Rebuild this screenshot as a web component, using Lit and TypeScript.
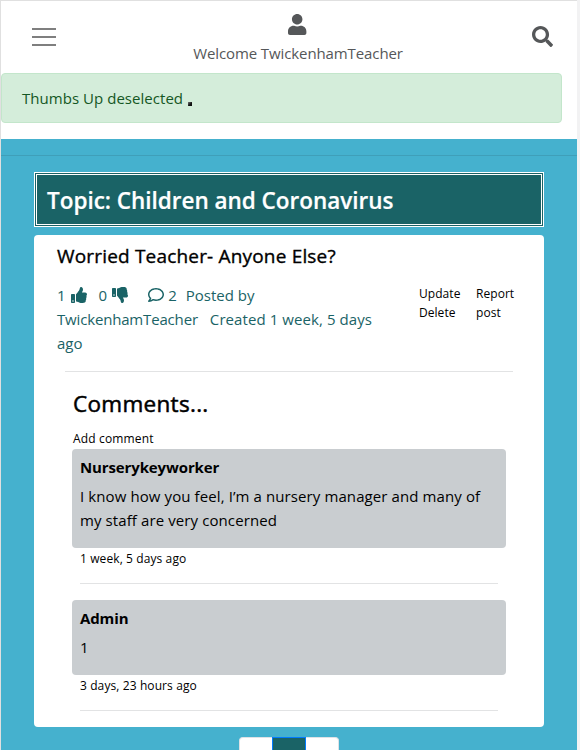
import { LitElement, html, css, svg } from "lit";
import { customElement, property } from "lit/decorators.js";

const ICONS: Record<string, { w: number; d: string }> = {
  user: { w: 448, d: "M224 256c70.7 0 128-57.3 128-128S294.7 0 224 0 96 57.3 96 128s57.3 128 128 128zm89.6 32h-16.7c-22.2 10.2-46.9 16-72.9 16s-50.6-5.8-72.9-16h-16.7C60.2 288 0 348.2 0 422.4V464c0 26.5 21.5 48 48 48h352c26.5 0 48-21.5 48-48v-41.6c0-74.2-60.2-134.4-134.4-134.4z" },
  search: { w: 512, d: "M505 442.7L405.3 343c-4.5-4.5-10.6-7-17-7H372c27.6-35.3 44-79.7 44-128C416 93.1 322.9 0 208 0S0 93.1 0 208s93.1 208 208 208c48.3 0 92.7-16.4 128-44v16.3c0 6.4 2.5 12.5 7 17l99.7 99.7c9.4 9.4 24.6 9.4 33.9 0l28.3-28.3c9.4-9.4 9.4-24.6.1-34zM208 336c-70.7 0-128-57.2-128-128 0-70.7 57.2-128 128-128 70.7 0 128 57.2 128 128 0 70.7-57.2 128-128 128z" },
  up: { w: 512, d: "M104 224H24c-13.255 0-24 10.745-24 24v240c0 13.255 10.745 24 24 24h80c13.255 0 24-10.745 24-24V248c0-13.255-10.745-24-24-24zM64 472c-13.255 0-24-10.745-24-24s10.745-24 24-24 24 10.745 24 24-10.745 24-24 24zM384 81.452c0 42.416-25.97 66.208-33.277 94.548h101.723c33.397 0 59.397 27.746 59.553 58.098.084 17.938-7.546 37.249-19.439 49.197l-.11.11c9.836 23.337 8.237 56.037-9.308 79.469 8.681 25.895-.069 57.704-16.382 74.757 4.298 17.598 2.244 32.575-6.148 44.632C440.202 511.587 389.616 512 346.839 512l-2.845-.001c-48.287-.017-87.806-17.598-119.56-31.725-15.957-7.099-36.821-15.887-52.651-16.178-6.54-.12-11.783-5.457-11.783-11.998v-213.77c0-3.2 1.282-6.271 3.558-8.521 39.614-39.144 56.648-80.587 89.117-113.111 14.804-14.832 20.188-37.236 25.393-58.902C282.515 39.293 291.817 0 312 0c24 0 72 8 72 81.452z" },
  down: { w: 512, d: "M0 56v240c0 13.255 10.745 24 24 24h80c13.255 0 24-10.745 24-24V56c0-13.255-10.745-24-24-24H24C10.745 32 0 42.745 0 56zm40 200c0-13.255 10.745-24 24-24s24 10.745 24 24-10.745 24-24 24-24-10.745-24-24zm272 256c-20.183 0-29.485-39.293-33.931-57.795-5.206-21.666-10.589-44.07-25.393-58.902-32.469-32.524-49.503-73.967-89.117-113.111a11.98 11.98 0 0 1-3.558-8.521V59.901c0-6.541 5.243-11.878 11.783-11.998 15.831-.29 36.694-9.079 52.651-16.178C256.189 17.598 295.709.017 343.995 0h2.844c42.777 0 93.363.413 113.774 29.737 8.392 12.057 10.446 27.034 6.148 44.632 16.312 17.053 25.063 48.863 16.382 74.757 17.544 23.432 19.143 56.132 9.308 79.469l.11.11c11.893 11.949 19.523 31.259 19.439 49.197-.156 30.352-26.157 58.098-59.553 58.098H350.723C358.03 364.34 384 388.132 384 430.548 384 504 336 512 312 512z" },
  comment: { w: 512, d: "M256 32C114.6 32 0 125.1 0 240c0 47.6 19.9 91.2 52.9 126.3C38 405.7 7 439.1 6.5 439.5c-6.6 7-8.4 17.2-4.6 26S14.4 480 24 480c61.5 0 110-25.7 139.1-46.3C192 442.8 223.2 448 256 448c141.4 0 256-93.1 256-208S397.4 32 256 32zm0 368c-26.7 0-53.1-4.1-78.4-12.1l-22.7-7.2-19.5 13.8c-14.3 10.1-33.9 21.4-57.5 29 7.3-12.1 14.4-25.7 19.9-40.2l10.6-28.1-20.6-21.8C69.7 314.1 48 282.2 48 240c0-88.2 93.3-160 208-160s208 71.8 208 160-93.3 160-208 160z" },
};

@customElement("fa-icon")
export class FaIcon extends LitElement {
  @property() name = "user";
  static styles = css`
    :host { display: inline-block; height: 16px; line-height: 0; }
    svg { display: block; height: 100%; fill: currentColor; }
  `;
  render() {
    const icon = ICONS[this.name];
    return html`<svg viewBox="0 0 ${icon.w} 512">${svg`<path d=${icon.d}></path>`}</svg>`;
  }
}

@customElement("forum-comment")
export class ForumComment extends LitElement {
  @property() author = "";
  @property() age = "";
  static styles = css`
    :host { display: block; color: #000; }
    .box { margin-right: 38px; padding: 6px 8px 16px; border-radius: 4px; background: #c9cdd0; }
    .author { font-size: 15px; font-weight: 700; line-height: 24px; letter-spacing: -0.12px; }
    .text { margin-top: 5px; line-height: 24px; letter-spacing: 0.1px; white-space: nowrap; }
    .age { margin: 1px 8px 0; font-size: 12px; line-height: 19px; letter-spacing: 0.1px; }
    .rule { height: 1px; margin: 15px 46px 16px 8px; background: #e2e3e4; }
  `;
  render() {
    return html`
      <div class="box">
        <div class="author">${this.author}</div>
        <div class="text"><slot></slot></div>
      </div>
      <div class="age">${this.age}</div>
      <div class="rule"></div>
    `;
  }
}

@customElement("app-root")
export class AppRoot extends LitElement {
  static styles = css`
    :host {
      display: block; box-sizing: border-box; height: 750px; overflow: hidden;
      background: #f2f2f3; padding-right: 3px;
      font-family: "Open Sans", "Noto Sans", sans-serif; font-size: 15px; line-height: 24px; color: #000;
    }
    .page { box-sizing: border-box; height: 750px; border: solid #e0e0e0; border-width: 1px 0 0 1px; background: #fff; display: flex; flex-direction: column; }
    .bar { display: flex; justify-content: space-between; height: 72px; flex: none; color: #555759; }
    .burger { display: flex; flex-direction: column; gap: 6px; margin: 27px 0 0 31px; width: 24px; }
    .burger i { height: 2px; background: #7f7f7f; }
    .who { display: flex; flex-direction: column; align-items: center; width: 211px; margin-left: 8px; white-space: nowrap; letter-spacing: -0.1px; }
    .who fa-icon { height: 21px; margin: 13px 1px 6px 0; }
    .search { height: 21px; margin: 25px 24px 0 0; }
    .alert { box-sizing: border-box; flex: none; width: 561px; height: 50px; padding: 12px 20px; border: 1px solid #c3e6cb; border-radius: 4px; background: #d4edda; color: #155724; display: flex; letter-spacing: 0.04px; }
    .dot { width: 4px; height: 4px; margin: 16px 0 0 5px; background: linear-gradient(135deg, #777, #111 60%); }
    .main { flex: 1; margin-top: 16px; background: #45b1ce; display: flex; flex-direction: column; }
    .line { height: 1px; margin: 16px 0; background: #3f9fb9; flex: none; }
    .topic { box-sizing: border-box; flex: none; height: 55px; margin: 0 33px; padding: 12px 10px 9px; border: 3px double #fff; background: #1a6366; color: #fff; font-size: 22.5px; font-weight: 600; line-height: 28px; letter-spacing: -0.02px; -webkit-text-stroke: 0.2px #fff; white-space: nowrap; }
    .card { box-sizing: border-box; flex: none; height: 492px; margin: 8px 33px 0; border-radius: 4px; background: #fff; padding: 9px 0 0 23px; }
    .title { font-size: 19px; font-weight: 500; line-height: 24px; letter-spacing: 0.18px; -webkit-text-stroke: 0.35px #000; white-space: nowrap; }
    .row { display: flex; margin-top: 15px; height: 72px; color: #1a6366; }
    .meta { width: 362px; white-space: nowrap; }
    .stats { display: flex; }
    .stats fa-icon { margin-top: 4px; }
    .stats .g1 { margin: 4px 12px 0 5px; }
    .stats .g2 { margin: 4px 20px 0 5px; }
    .stats .g3 { margin: 4px 4px 0 0; }
    .posted { margin-left: 9px; }
    .name { letter-spacing: -0.17px; }
    .created { margin-left: 12px; letter-spacing: 0.08px; }
    .links { font-size: 12px; line-height: 19px; color: #000; width: 57px; margin-top: 1px; letter-spacing: 0.05px; white-space: nowrap; }
    .rule { height: 1px; margin: 16px 31px 0 8px; background: #e2e3e4; }
    .heading { margin: 17px 0 0 16px; font-size: 22.5px; font-weight: 500; line-height: 29px; letter-spacing: 0.3px; -webkit-text-stroke: 0.5px #000; }
    .add { margin: 11px 0 1px 16px; font-size: 12px; line-height: 19px; letter-spacing: 0.15px; }
    forum-comment { margin-left: 15px; }
    .pager { display: flex; width: 100px; height: 38px; margin: 10px auto 0 238px; flex: none; }
    .pager div { box-sizing: border-box; width: 33px; border: 1px solid #dee2e6; background: #fff; }
    .pager div:first-child { border-radius: 4px 0 0 4px; border-right: 0; }
    .pager div:last-child { border-radius: 0 4px 4px 0; border-left: 0; }
    .pager .on { width: 34px; border-color: #007bff; background: #1a6366; }
  `;
  render() {
    return html`
      <div class="page">
        <header class="bar">
          <div class="burger"><i></i><i></i><i></i></div>
          <div class="who"><fa-icon name="user"></fa-icon><span>Welcome TwickenhamTeacher</span></div>
          <fa-icon class="search" name="search"></fa-icon>
        </header>
        <div class="alert"><span>Thumbs Up deselected</span><i class="dot"></i></div>
        <main class="main">
          <div class="line"></div>
          <div class="topic">Topic: Children and Coronavirus</div>
          <section class="card">
            <div class="title">Worried Teacher- Anyone Else?</div>
            <div class="row">
              <div class="meta">
                <div class="stats">
                  <span>1</span><fa-icon class="g1" name="up"></fa-icon>
                  <span>0</span><fa-icon class="g2" name="down"></fa-icon>
                  <fa-icon class="g3" name="comment"></fa-icon><span>2</span>
                  <span class="posted">Posted by</span>
                </div>
                <div><span class="name">TwickenhamTeacher</span><span class="created">Created 1 week, 5 days</span></div>
                <div>ago</div>
              </div>
              <div class="links">Update<br />Delete</div>
              <div class="links">Report<br />post</div>
            </div>
            <div class="rule"></div>
            <div class="heading">Comments...</div>
            <div class="add">Add comment</div>
            <forum-comment author="Nurserykeyworker" age="1 week, 5 days ago">I know how you feel, I’m a nursery manager and many of<br />my staff are very concerned</forum-comment>
            <forum-comment author="Admin" age="3 days, 23 hours ago">1</forum-comment>
          </section>
          <nav class="pager"><div></div><div class="on"></div><div></div></nav>
        </main>
      </div>
    `;
  }
}
